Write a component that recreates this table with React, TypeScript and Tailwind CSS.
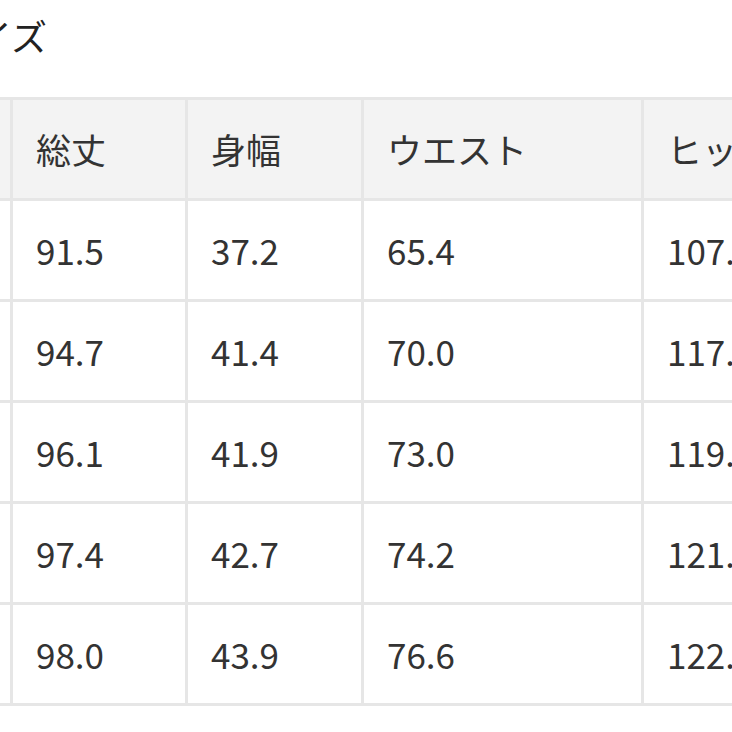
const headers = ['サイズ', '総丈', '身幅', 'ウエスト', 'ヒップ']

const rows = [
  ['S', '91.5', '37.2', '65.4', '107.0'],
  ['M', '94.7', '41.4', '70.0', '117.2'],
  ['L', '96.1', '41.9', '73.0', '119.6'],
  ['XL', '97.4', '42.7', '74.2', '121.4'],
  ['XXL', '98.0', '43.9', '76.6', '122.8'],
]

const cols = ['w-[175px]', 'w-[175px]', 'w-[176px]', 'w-[280px]', 'w-[200px]']

export default function App() {
  return (
    <div
      className="h-[732px] w-[732px] overflow-hidden bg-white text-[#333]"
      style={{ fontFamily: '"Noto Sans CJK JP", "Noto Sans", sans-serif' }}
    >
      <h2 className="ml-[-60px] mt-[17px] text-[36px] leading-none font-normal whitespace-nowrap text-[#222]">
        サイズ
      </h2>

      <table className="ml-[-165px] mt-[44px] w-[1009px] max-w-none table-fixed border-collapse">
        <colgroup>
          {cols.map((c, i) => (
            <col key={i} className={c} />
          ))}
        </colgroup>
        <thead>
          <tr>
            {headers.map((h) => (
              <th
                key={h}
                className="h-[101px] border-[3px] border-[#e6e6e6] bg-[#f3f3f3] pl-[23px] text-left align-middle text-[35px] font-normal whitespace-nowrap"
              >
                {h}
              </th>
            ))}
          </tr>
        </thead>
        <tbody>
          {rows.map((r) => (
            <tr key={r[0]}>
              {r.map((c, i) => (
                <td
                  key={i}
                  className="h-[101px] border-[3px] border-[#e6e6e6] bg-white pl-[23px] align-middle text-[35px] whitespace-nowrap"
                >
                  {c}
                </td>
              ))}
            </tr>
          ))}
        </tbody>
      </table>

      <div className="mt-[26px] border-t border-[#e8e8e8]" />
    </div>
  )
}
